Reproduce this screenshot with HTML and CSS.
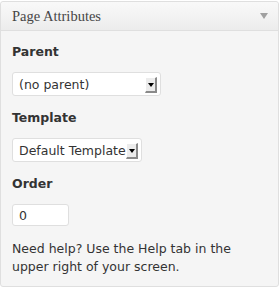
FILE: index.html
```html
<!DOCTYPE html>
<html>
<head>
<meta charset="utf-8">
<link rel="stylesheet" href="styles.css">
</head>
<body>
<div class="box">
  <div class="box-head">
    <h3 class="box-title">Page Attributes</h3>
    <span class="toggle"></span>
  </div>
  <div class="box-body">
    <p class="label">Parent</p>
    <div class="sel sel-parent">
      <select><option>(no parent)</option></select>
      <span class="sel-btn"><span class="tri"></span></span>
    </div>
    <p class="label">Template</p>
    <div class="sel sel-template">
      <select><option>Default Template</option></select>
      <span class="sel-btn"><span class="tri"></span></span>
    </div>
    <p class="label">Order</p>
    <input class="order" type="text" value="0">
    <p class="help">Need help? Use the Help tab in the upper right of your screen.</p>
  </div>
</div>
</body>
</html>
```
FILE: styles.css
```css
html, body {
  margin: 0;
  padding: 0;
  background: #ffffff;
}
body {
  padding: 1px 1px 1px 0;
  font-family: "DejaVu Sans", sans-serif;
  font-size: 12.5px;
  color: #333333;
}
.box {
  border: 1px solid #dfdfdf;
  border-radius: 3px;
  background: #f5f5f5;
  box-sizing: border-box;
  width: 279px;
}
.box-head {
  height: 28px;
  border-bottom: 1px solid #dfdfdf;
  background: linear-gradient(to bottom, #f9f9f9, #ececec);
  display: flex;
  align-items: center;
  justify-content: space-between;
  padding: 0 10px 0 11px;
  border-radius: 3px 3px 0 0;
}
.box-title {
  margin: 0;
  font-family: "Liberation Serif", serif;
  font-weight: normal;
  font-size: 14.5px;
  color: #464646;
}
.toggle {
  width: 0;
  height: 0;
  border-left: 4px solid transparent;
  border-right: 4px solid transparent;
  border-top: 6px solid #a0a0a0;
}
.box-body {
  padding: 13px 11px 10px 11px;
}
.label {
  margin: 0 0 12px 0;
  font-weight: bold;
  color: #333333;
  line-height: 16px;
}
.sel {
  position: relative;
  display: inline-block;
  margin-bottom: 14px;
}
.sel select {
  -webkit-appearance: none;
  appearance: none;
  font-family: "DejaVu Sans", sans-serif;
  font-size: 12.5px;
  color: #333333;
  background: #ffffff;
  border: 1px solid #dfdfdf;
  border-radius: 3px;
  height: 24px;
  padding: 0 0 0 6px;
  margin: 0;
  display: block;
  box-sizing: border-box;
}
.sel-parent select { width: 149px; }
.sel-template select { width: 130px; }
.sel-btn {
  position: absolute;
  right: 4px;
  top: 5px;
  width: 12px;
  height: 16px;
  background: #ececec;
  border-right: 2px solid #8a8a8a;
  border-bottom: 2px solid #8a8a8a;
  border-top: 1px solid #ffffff;
  border-left: 1px solid #ffffff;
  box-sizing: border-box;
  display: flex;
  align-items: center;
  justify-content: center;
}
.tri {
  width: 0;
  height: 0;
  border-left: 3px solid transparent;
  border-right: 3px solid transparent;
  border-top: 4px solid #000000;
}
.order {
  display: block;
  font-family: "DejaVu Sans", sans-serif;
  font-size: 12.5px;
  color: #333333;
  width: 57px;
  height: 22px;
  box-sizing: border-box;
  border: 1px solid #dfdfdf;
  border-radius: 3px;
  background: #ffffff;
  padding: 0 6px;
  margin: 0 0 14px 0;
}
.help {
  margin: 0;
  line-height: 18px;
  color: #333333;
}
```
